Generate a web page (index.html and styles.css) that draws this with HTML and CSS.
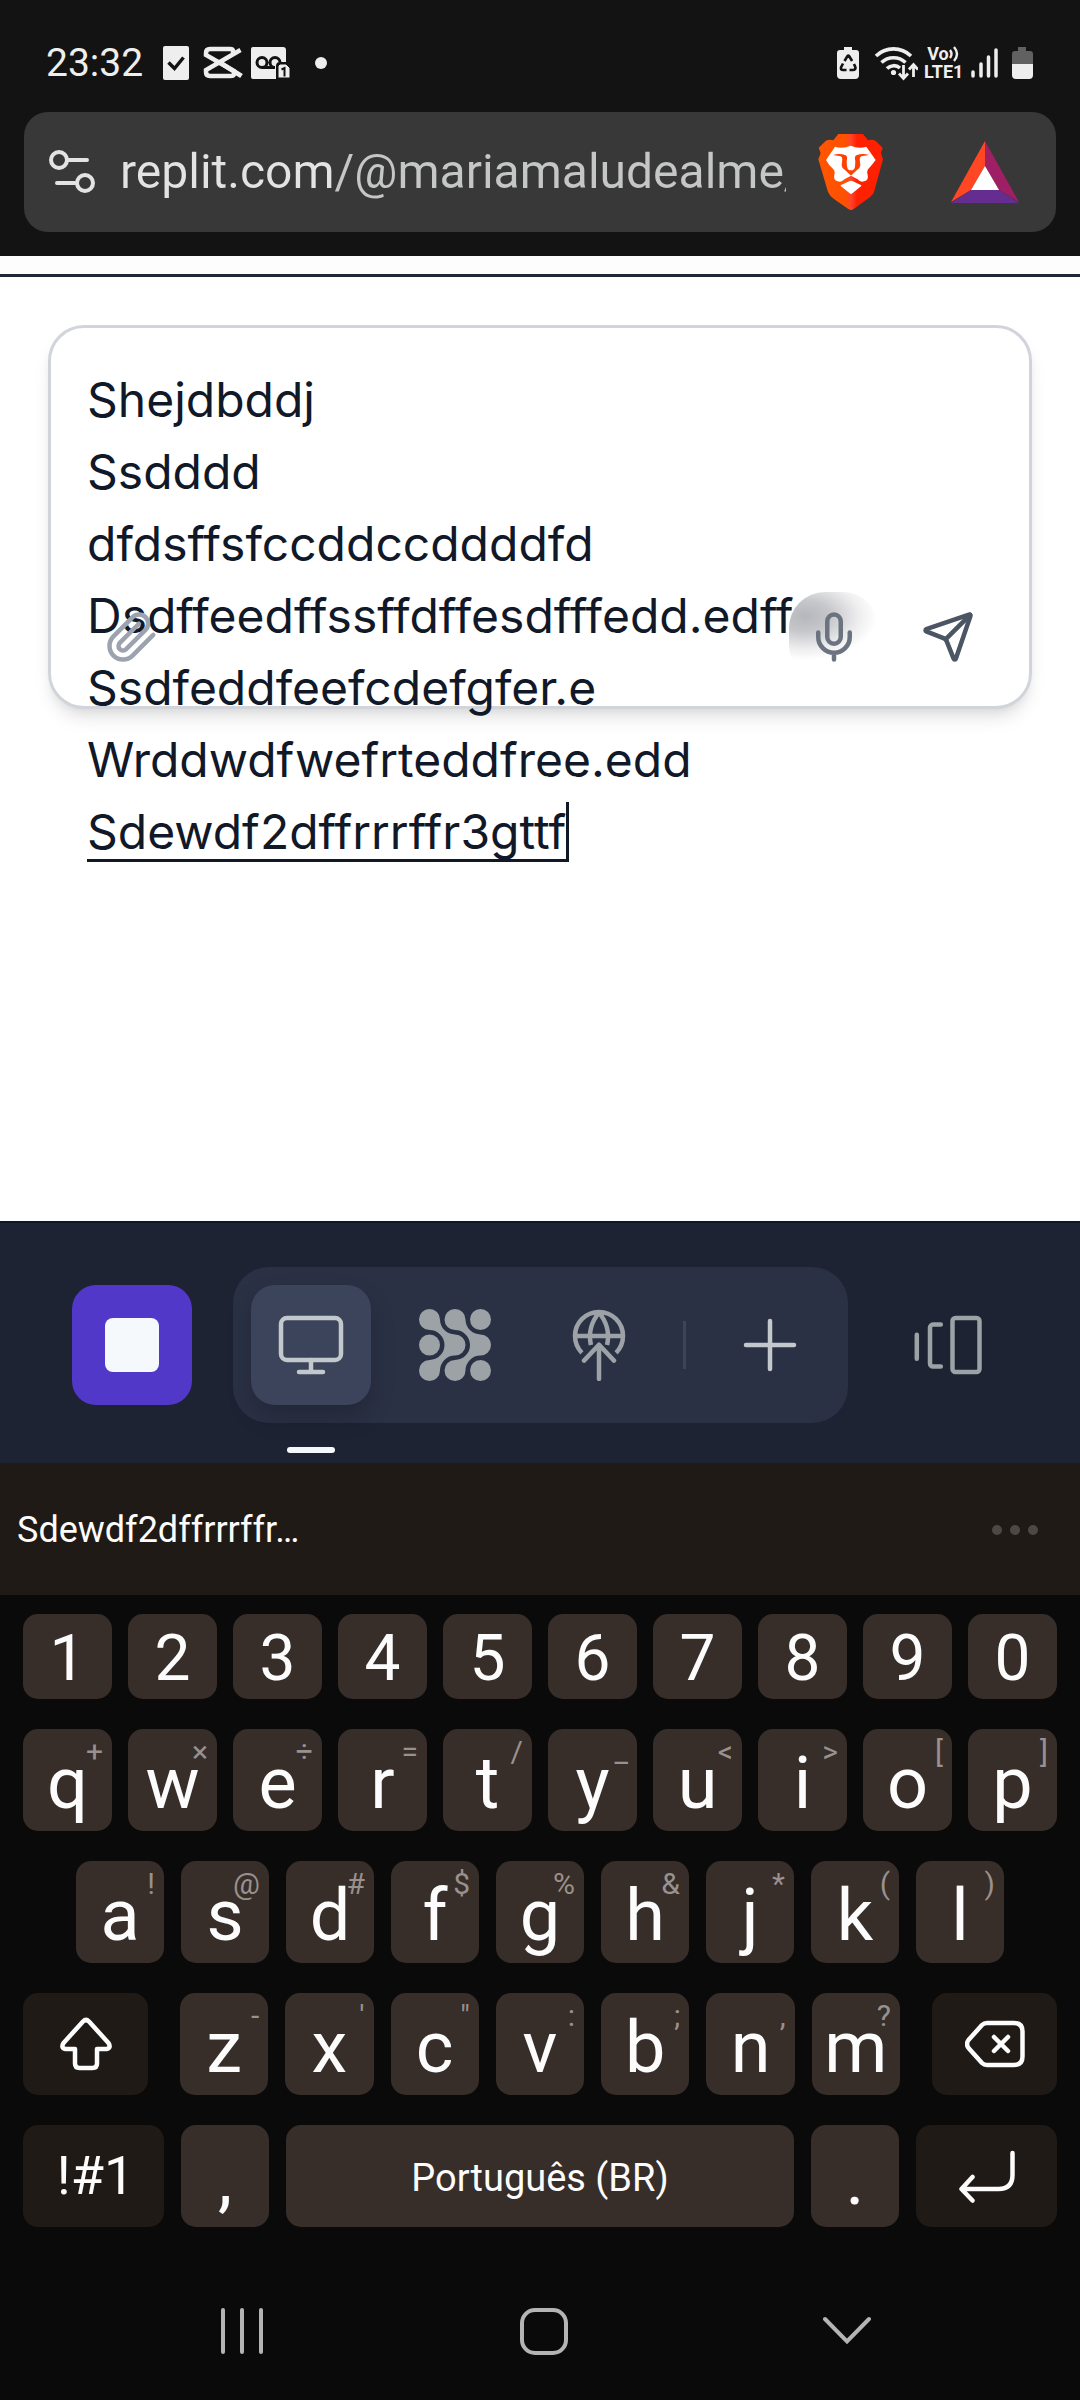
FILE: index.html
```html
<!DOCTYPE html>
<html lang="pt-BR">
<head>
<meta charset="utf-8">
<meta name="viewport" content="width=device-width, initial-scale=1">
<title>Replit</title>
<link rel="stylesheet" href="styles.css">
</head>
<body>
<header class="browser">
  <div class="status">
    <time class="clock">23:32</time>
    <svg class="status-left" width="166" height="36" viewBox="0 0 166 36" aria-hidden="true">
      <rect x="1" y="1" width="26" height="34" rx="2" fill="#eee"/>
      <path d="M6.500 17.500l6 6 9-11" fill="none" stroke="#131313" stroke-width="3.500"/>
      <path d="M71 8.500V6q0-2-3-2H48q-4 0-4 4v2L72 26v3q0 2-4 2H48q-4 0-4-4v-2L78.500 5" fill="none" stroke="#eee" stroke-width="4.500"/>
      <path d="M57 17l22.500 14" stroke="#eee" stroke-width="5"/>
      <path d="M91 2h30a3 3 0 0 1 3 3v12h-6q-4 0-4 4v13H91a2 2 0 0 1-2-2V4a2 2 0 0 1 2-2z" fill="#eee"/>
      <path d="M105 22.500H100a5 5 0 1 1 5-5 5 5 0 0 1-5 5h13a5 5 0 1 1 5-5" fill="none" stroke="#131313" stroke-width="3"/>
      <path d="M118 19h6l4 4v10h-12V21z" fill="#eee" stroke="#131313" stroke-width="1"/>
      <path d="M119.500 24.500l3-1.500v8.500" fill="none" stroke="#131313" stroke-width="2"/>
      <circle cx="159" cy="18" r="6" fill="#eee"/>
    </svg>
    <div class="status-right">
      <svg width="82" height="36" viewBox="0 0 82 36" aria-hidden="true">
        <path d="M8 2h8v3h4a3 3 0 0 1 3 3v22a4 4 0 0 1-4 4H5a4 4 0 0 1-4-4V8a3 3 0 0 1 3-3h4z" fill="#eee"/>
        <path d="M8.500 16l3-5q.8-1 1.600 0l3 5M18 19l1.500 3.500q0 2.500-2.500 2.500h-3.500M10.500 25H7q-2.500 0-2-2.500L7 18.500" fill="none" stroke="#131313" stroke-width="2.600"/>
        <g fill="none" stroke="#eee" stroke-width="3.600">
          <path d="M40 11a25 25 0 0 1 35 0M45.500 17.500a17.500 17.500 0 0 1 24 0M51 23.500a9.500 9.500 0 0 1 13-.5"/>
          <path d="M67.500 20v13M63 28.500l4.500 5 4.500-5M77.500 32V20M73 24.500l4.500-5 4.500 5" stroke-width="2.800"/>
        </g>
        <circle cx="57.500" cy="27.500" r="2.600" fill="#eee"/>
      </svg>
      <div class="volte">
        <div class="volte-top">Vo<svg width="12" height="18" viewBox="0 0 12 18" aria-hidden="true"><path d="M1 5q3 4 0 8M5 2q6 7 0 14" fill="none" stroke="#eee" stroke-width="2.400"/></svg></div>
        <div>LTE1</div>
      </div>
      <svg width="64" height="36" viewBox="0 0 64 36" aria-hidden="true">
        <path d="M3 27v4M11 19v12M18.500 12v19M26 5v26" stroke="#eee" stroke-width="3.500" stroke-linecap="round"/>
        <path d="M48 2h8v4h4a3 3 0 0 1 3 3v11H42V9a3 3 0 0 1 3-3h3z" fill="#616161"/>
        <path d="M42 19h21v11a4 4 0 0 1-4 4H46a4 4 0 0 1-4-4z" fill="#eee"/>
      </svg>
    </div>
  </div>
  <div class="address">
    <button class="plain" aria-label="Informações do site">
      <svg width="48" height="48" viewBox="0 0 48 48" fill="none" stroke="#e3e3e3" stroke-width="4" stroke-linecap="round"><circle cx="11" cy="12" r="8"/><path d="M20 12h19M9 35h18"/><circle cx="37" cy="35" r="8"/></svg>
    </button>
    <input class="url" type="text" aria-label="Endereço" value="replit.com/@mariamaludealme/" readonly>
    <button class="plain" aria-label="Brave Shields">
      <svg width="80" height="90" viewBox="0 -9 240 270">
        <defs><linearGradient id="shield" x1="0" x2="1" y1="0" y2="0"><stop offset="0" stop-color="#ff5601"/><stop offset=".42" stop-color="#ff5000"/><stop offset=".5" stop-color="#ff452a"/><stop offset=".6" stop-color="#ff2000"/><stop offset="1" stop-color="#ff2000"/></linearGradient></defs>
        <path fill="url(#shield)" d="M85 12H159L174 31Q188 27 197 33L218 53 213 70 219 88 192 186Q187 198 171 208L130 238Q123 242 116 238L73 208Q59 198 54 186L25 88 32 70 26 53 47 33Q57 27 70 31Z"/>
        <path fill="#fff" d="M75 50Q98 57 122 47 146 57 169 50L197 90Q186 105 174 118 170 124 173 135 177 150 163 154 150 158 143 148L123 137 103 148Q96 158 83 154 69 150 73 135 76 124 70 118 56 105 48 90Z"/>
        <path fill="#ff4000" d="M69 75Q88 68 107 76 114 80 110 94L111 110Q112 118 118 121H128Q134 118 135 110L136 94Q132 80 139 76 158 68 177 75L154 79Q149 81 149 88L151 106Q151 114 141 120L125 135Q123 137 121 135L105 120Q95 114 95 106L97 88Q97 81 92 79Z"/>
        <path fill="#fff" d="M92 168Q91 165 95 164L119 153Q123 151 127 153L151 164Q155 165 154 168L127 190Q123 193 119 190Z"/>
      </svg>
    </button>
    <button class="plain rewards" aria-label="Brave Rewards">
      <svg width="68" height="62" viewBox="0 0 68 62"><path fill="#ff4724" d="M34 0V25L20 49 0 61Z"/><path fill="#9e1f63" d="M34 0V25L48 49 68 61Z"/><path fill="#662d91" d="M0 62L20 49H48L68 62Z"/><path fill="#fff" d="M34 25L20 49H48Z"/></svg>
    </button>
  </div>
</header>

<main class="page">
  <form class="composer">
    <label class="sr" for="prompt">Mensagem</label>
    <div class="field">
      <textarea id="prompt" rows="7" spellcheck="false">Shejdbddj
Ssdddd
dfdsffsfccddccddddfd
Dsdffeedffssffdffesdfffedd.edff
Ssdfeddfeefcdefgfer.e
Wrddwdfwefrteddfree.edd
Sdewdf2dffrrrffr3gttf</textarea>
      <span class="composing"></span>
    </div>
    <div class="actions">
      <button type="button" class="attach" aria-label="Anexar arquivo"><svg width="54" height="54" viewBox="0 0 24 24"><path d="m21.440 11.050-9.190 9.190a6 6 0 0 1-8.490-8.490l8.570-8.570A4 4 0 1 1 18 8.840l-8.590 8.570a2 2 0 0 1-2.830-2.830l8.490-8.480"/></svg></button>
      <button type="button" class="mic" aria-label="Gravar áudio"><svg width="54" height="54" viewBox="0 0 24 24"><path d="M12 2a3 3 0 0 0-3 3v7a3 3 0 0 0 6 0V5a3 3 0 0 0-3-3Z"/><path d="M19 10v2a7 7 0 0 1-14 0v-2M12 19v3"/></svg></button>
      <button type="submit" class="send" aria-label="Enviar"><svg width="54" height="54" viewBox="0 0 24 24"><path d="M14.536 21.686a.5.5 0 0 0 .937-.024l6.500-19a.496.496 0 0 0-.635-.635l-19 6.500a.5.5 0 0 0-.024.937l7.930 3.180a2 2 0 0 1 1.112 1.110z"/><path d="m21.854 2.147-10.940 10.939"/></svg></button>
    </div>
  </form>
</main>

<nav class="toolbar" aria-label="Ferramentas">
  <button class="tool stop" aria-label="Parar"><svg width="54" height="54" viewBox="0 0 54 54"><rect width="54" height="54" rx="8" fill="#f5f9fc" stroke="none"/></svg></button>
  <div class="tabs">
    <button class="tool active" aria-label="Webview"><svg width="72" height="72" viewBox="0 0 24 24"><rect x="2" y="3" width="20" height="14" rx="2"/><path d="M8 21h8M12 17v4"/></svg></button>
    <button class="tool" aria-label="Agente"><svg width="72" height="72" viewBox="0 0 24 24"><g fill="currentColor" stroke="none"><circle cx="3.500" cy="12" r="3.500"/><circle cx="20.500" cy="3.500" r="3.500"/><circle cx="20.500" cy="20.500" r="3.500"/><path id="flow" d="M3.500 0a3.500 3.500 0 0 1 3.500 3.500A5 5 0 0 0 12 8.500a3.500 3.500 0 0 1 0 7A5 5 0 0 0 7 20.500a3.500 3.500 0 1 1-3.500-3.500A5 5 0 0 0 8.500 12 5 5 0 0 0 3.500 7a3.500 3.500 0 1 1 0-7z"/><use href="#flow" x="8.500"/></g></svg></button>
    <button class="tool" aria-label="Publicar"><svg width="72" height="72" viewBox="0 0 24 24"><path stroke-linecap="butt" d="M6.300 14.600A8 8 0 1 1 17.700 14.600M4 9h16M9.300 12Q8 6 12 1.200 16 6 14.700 12"/><path d="M12 23.300V11.900M7 17.200l5-5.300 5 5.300"/></svg></button>
    <span class="divider"></span>
    <button class="tool add" aria-label="Nova aba"><svg width="72" height="72" viewBox="0 0 24 24"><path d="M12 4v16M4 12h16"/></svg></button>
  </div>
  <button class="tool" aria-label="Abas"><svg width="72" height="72" viewBox="0 0 24 24"><rect x="13.500" y="3" width="9" height="18" rx="1"/><path d="M9.600 5.200H7a1 1 0 0 0-1 1v12a1 1 0 0 0 1 1h2.600M1.600 8.600v8"/></svg></button>
</nav>

<section class="keyboard" aria-label="Teclado">
  <div class="suggest">
    <button class="word">Sdewdf2dffrrrffr…</button>
    <button class="plain" aria-label="Mais opções"><svg width="48" height="48" viewBox="0 0 48 48" fill="#4d4845"><circle cx="6" cy="24" r="5"/><circle cx="24" cy="24" r="5"/><circle cx="42" cy="24" r="5"/></svg></button>
  </div>
  <div class="rows">
    <div class="row digits"><button>1</button><button>2</button><button>3</button><button>4</button><button>5</button><button>6</button><button>7</button><button>8</button><button>9</button><button>0</button></div>
    <div class="row ten"><button>q<small>+</small></button><button>w<small>×</small></button><button>e<small>÷</small></button><button>r<small>=</small></button><button>t<small>/</small></button><button>y<small>_</small></button><button>u<small>&lt;</small></button><button>i<small>&gt;</small></button><button>o<small>[</small></button><button>p<small>]</small></button></div>
    <div class="row nine"><button>a<small>!</small></button><button>s<small>@</small></button><button>d<small>#</small></button><button>f<small>$</small></button><button>g<small>%</small></button><button>h<small>&amp;</small></button><button>j<small>*</small></button><button>k<small>(</small></button><button>l<small>)</small></button></div>
    <div class="row shift-row">
      <button class="fn" aria-label="Shift"><svg width="54" height="54" viewBox="0 0 54 54"><path d="M24 4.500q3-3 6 0L49.500 26q3 5-2 6H38V46.500q0 4.500-4.500 4.500h-13q-4.500 0-4.500-4.500V32H6.500q-5-1-2-6z"/></svg></button>
      <div class="row letters"><button>z<small>-</small></button><button>x<small>'</small></button><button>c<small>"</small></button><button>v<small>:</small></button><button>b<small>;</small></button><button>n<small>,</small></button><button>m<small>?</small></button></div>
      <button class="fn" aria-label="Apagar"><svg width="60" height="54" viewBox="0 0 60 54"><path d="M22 6H49q8.500 0 8.500 8.500v25Q57.500 48 49 48H22q-3 0-5-2L3.500 31q-3-4 0-8L17 8q2-2 5-2zM29 20l14 14M43 20l-14 14"/></svg></button>
    </div>
    <div class="row bottom-row">
      <button class="fn symbols">!#1</button>
      <button>,</button>
      <button class="space">Português (BR)</button>
      <button>.</button>
      <button class="fn" aria-label="Enter"><svg width="58" height="54" viewBox="0 0 58 54"><path d="M54.500 4v22q0 14-14 14H4M14.500 28L3.500 40l11 11.500"/></svg></button>
    </div>
  </div>
</section>

<nav class="system" aria-label="Sistema">
  <button class="plain" aria-label="Recentes"><svg width="48" height="48" viewBox="0 0 48 48"><path d="M5 3v42M24 3v42M43 3v42"/></svg></button>
  <button class="plain" aria-label="Início"><svg width="48" height="48" viewBox="0 0 48 48"><rect x="2" y="3" width="44" height="43" rx="13"/></svg></button>
  <button class="plain" aria-label="Voltar"><svg width="48" height="48" viewBox="0 0 48 48"><path d="M2 12l22 22.500L46 12"/></svg></button>
</nav>
</body>
</html>
```

FILE: styles.css
```css
* { box-sizing: border-box; }

body {
  margin: 0;
  min-height: 100vh;
  display: flex;
  flex-direction: column;
  background: #0a0a0a;
  font-family: Roboto, "Liberation Sans", sans-serif;
}

button, input, textarea {
  font: inherit;
  color: inherit;
  border: 0;
  padding: 0;
  margin: 0;
  background: none;
  outline: 0;
}

svg { display: block; flex: none; }

.plain {
  display: flex;
  align-items: center;
  justify-content: center;
}

.sr {
  position: absolute;
  width: 1px;
  height: 1px;
  overflow: hidden;
  clip-path: inset(50%);
}

/* Browser chrome */
.browser {
  margin-bottom: 18px;
  padding: 0 24px 24px;
  background: #131313;
}

.status {
  display: flex;
  align-items: center;
  height: 112px;
  padding: 14px 22px 0;
  color: #eee;
}

.clock {
  font-size: 39px;
  width: 116px;
}

.status-right {
  display: flex;
  align-items: center;
  gap: 6px;
  margin-left: auto;
}

.volte {
  width: 40px;
  font-size: 18px;
  font-weight: 700;
  line-height: 18px;
}

.volte-top {
  display: flex;
  justify-content: center;
}

.address {
  display: flex;
  align-items: center;
  gap: 24px;
  height: 120px;
  padding-left: 24px;
  border-radius: 24px;
  background: #383838;
}

.url {
  flex: 1;
  min-width: 0;
  font-size: 48px;
  line-height: 60px;
  background: linear-gradient(90deg, #e3e3e3 215px, #c4c7c5 215px);
  background-clip: text;
  -webkit-text-fill-color: transparent;
}

.rewards { width: 142px; }

/* Web page */
.page {
  flex: 1;
  padding: 48px;
  background: #fff;
  border-top: 3px solid #1f2937;
  box-shadow: 0 -18px #fdfdfd;
}

.composer {
  position: relative;
  height: 384px;
  padding: 36px;
  border: 3px solid #d1d5db;
  border-radius: 36px;
  background: #fff;
  box-shadow: 0 12px 18px -3px rgba(0, 0, 0, .1), 0 6px 12px -6px rgba(0, 0, 0, .1);
}

.field { position: relative; }

.field textarea {
  display: block;
  width: 100%;
  font-family: Inter, sans-serif;
  font-size: 48px;
  line-height: 72px;
  color: #111827;
  resize: none;
  overflow: hidden;
}

/* Marks the word that is still being typed, with the caret at its end */
.composing {
  position: absolute;
  left: 0;
  bottom: 6px;
  width: 482px;
  height: 60px;
  border: solid #111827;
  border-width: 0 3px 3px 0;
}

.actions {
  position: absolute;
  left: 36px;
  right: 36px;
  bottom: 24px;
  display: flex;
  gap: 24px;
}

.actions button {
  display: flex;
  align-items: center;
  justify-content: center;
  width: 90px;
  height: 90px;
  border-radius: 36px;
}

.actions svg {
  fill: none;
  stroke: currentColor;
  stroke-width: 2;
  stroke-linecap: round;
  stroke-linejoin: round;
}

.attach { margin-right: auto; color: #9ca3af; }

.mic {
  color: #6b7280;
  background: radial-gradient(ellipse 72px 44px at 16px 24px, #b6b7bc, #c6c7cb 35%, #eeeeef 75%, #fff);
}

.send { color: #4b5563; }

/* Workspace toolbar */
.toolbar {
  display: flex;
  align-items: center;
  justify-content: space-between;
  height: 242px;
  padding: 4px 72px 0;
  border-top: 2px solid #0e1525;
  background: #1d2332;
}

.tool {
  position: relative;
  display: flex;
  align-items: center;
  justify-content: center;
  width: 120px;
  height: 120px;
  border-radius: 24px;
  color: #9da2a6;
}

.tool svg {
  fill: none;
  stroke: currentColor;
  stroke-width: 1.5;
  stroke-linecap: round;
  stroke-linejoin: round;
}

.tool.stop { background: #5238c9; }

.tabs {
  display: flex;
  align-items: center;
  gap: 24px;
  padding: 18px;
  border-radius: 36px;
  background: #2b3145;
}

.tool.active {
  color: #c2c8cc;
  background: #3c445c;
  box-shadow: 0 12px 24px rgba(2, 2, 3, .2);
}

.tool.active::after {
  content: "";
  position: absolute;
  bottom: -48px;
  width: 48px;
  height: 6px;
  border-radius: 3px;
  background: #f5f9fc;
}

.tool.add { color: #c2c8cc; }

.divider {
  width: 3px;
  height: 48px;
  background: #3c445c;
}

/* Keyboard */
.suggest {
  display: flex;
  align-items: center;
  justify-content: space-between;
  height: 132px;
  padding: 2px 41px 0 17px;
  background: #1f1a16;
}

.word {
  font-size: 36px;
  color: #fcfcfc;
}

.rows {
  display: grid;
  gap: 30px;
  padding: 19px 23px 35px;
}

.row {
  display: flex;
  gap: 17px;
}

.row button {
  position: relative;
  display: flex;
  align-items: center;
  justify-content: center;
  flex: 1 1 0;
  min-width: 0;
  height: 102px;
  padding-top: 8px;
  border-radius: 15px;
  background: #372d29;
  color: #fcfcfc;
  font-size: 72px;
  line-height: 84px;
}

.row.digits, .row.ten { gap: 16px; }

.row.digits button {
  height: 85px;
  padding-top: 4px;
  font-size: 64px;
  line-height: 76px;
}

.row small {
  position: absolute;
  top: 5px;
  right: 9px;
  font-size: 30px;
  line-height: 36px;
  color: #99918d;
}

.row.nine { padding: 0 53px; }

.row.shift-row { gap: 32px; }

.row.letters { flex: 1; }

.row .fn {
  padding: 0;
  background: #1f1a16;
}

.row.shift-row .fn { flex: none; width: 125px; }

.row .fn svg {
  fill: none;
  stroke: #fcfcfc;
  stroke-width: 4.5;
  stroke-linecap: round;
  stroke-linejoin: round;
}

.row.bottom-row {
  display: grid;
  grid-template-columns: 141fr 88fr 508fr 88fr 141fr;
}

.row .fn.symbols {
  padding-left: 4px;
  font-size: 54px;
}

.row .space {
  padding: 4px 0 0;
  font-size: 38px;
  line-height: 44px;
}

/* System navigation */
.system {
  display: flex;
  height: 138px;
  padding: 0 82px 0 91px;
}

.system button { flex: 1; }

.system svg {
  fill: none;
  stroke: #b4b4b4;
  stroke-width: 4;
  stroke-linecap: round;
}
```
